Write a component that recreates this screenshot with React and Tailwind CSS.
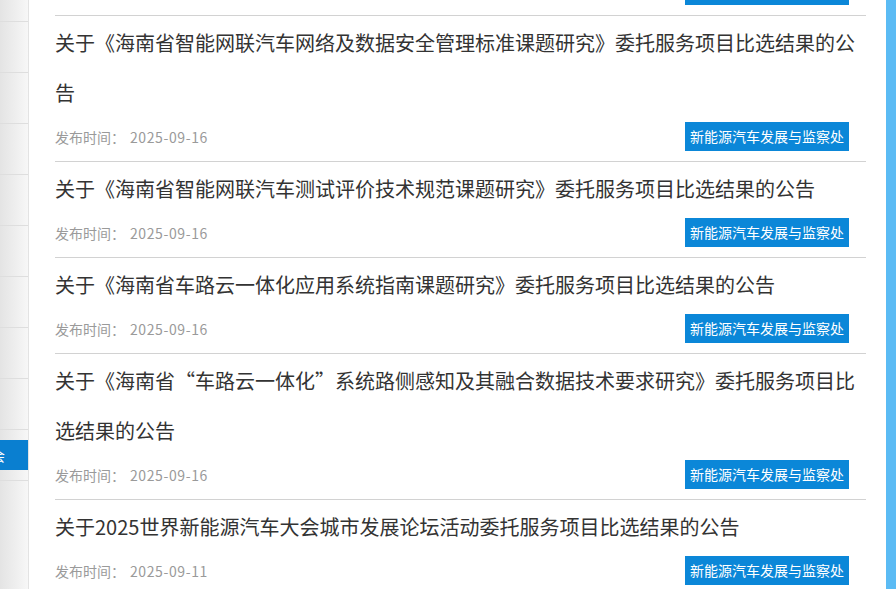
import React from 'react';

const items = [
  {
    title: '关于《海南省智能网联汽车网络及数据安全管理标准课题研究》委托服务项目比选结果的公告',
    date: '2025-09-16',
  },
  {
    title: '关于《海南省智能网联汽车测试评价技术规范课题研究》委托服务项目比选结果的公告',
    date: '2025-09-16',
  },
  {
    title: '关于《海南省车路云一体化应用系统指南课题研究》委托服务项目比选结果的公告',
    date: '2025-09-16',
  },
  {
    title: '关于《海南省“车路云一体化”系统路侧感知及其融合数据技术要求研究》委托服务项目比选结果的公告',
    date: '2025-09-16',
  },
  {
    title: '关于2025世界新能源汽车大会城市发展论坛活动委托服务项目比选结果的公告',
    date: '2025-09-11',
  },
];

const font = { fontFamily: '"Microsoft YaHei", "Noto Sans CJK SC", "Noto Sans", sans-serif' };

function Badge() {
  return (
    <span className="inline-flex items-center justify-center w-[164px] h-[29px] bg-[#0b87d8] text-white text-[14px]">
      新能源汽车发展与监察处
    </span>
  );
}

function Sidebar() {
  const rows = Array.from({ length: 8 });
  return (
    <div className="w-[29px] shrink-0 bg-gradient-to-r from-[#e4e4e4] to-[#f7f7f7] border-r border-[#e3e3e3]">
      <div className="h-[22px] border-b border-[#dedede]" />
      {rows.map((_, i) => (
        <div key={i} className="h-[51px] border-b border-[#dedede]" />
      ))}
      <div className="h-[51px] border-b border-[#dedede] pt-[10px] overflow-hidden">
        <div className="h-[30px] bg-[#0a7fd0] text-white text-[14px] leading-[30px] whitespace-nowrap overflow-hidden">
          <span className="inline-block -ml-[9px]">会</span>
        </div>
      </div>
    </div>
  );
}

export default function App() {
  return (
    <div className="flex w-[896px] h-[589px] overflow-hidden bg-white" style={font}>
      <Sidebar />
      <main className="flex-1 pl-[26px] pr-[20px] bg-white">
        <div className="h-[15px] flex justify-end pr-[17px]">
          <div className="h-[5px] w-[164px] bg-[#0b87d8]" />
        </div>
        {items.map((item, i) => (
          <div key={i} className="border-t border-[#d2d2d2] pt-[2px] pb-[10px]">
            <h3 className="text-[20px] leading-[50px] text-[#333333] font-normal">{item.title}</h3>
            <div className="mt-[4px] flex items-center justify-between pr-[17px] h-[29px]">
              <p className="text-[14px] text-[#9a9a9a] pt-[1px]">
                发布时间：<span className="ml-[5px] tracking-[0.6px]">{item.date}</span>
              </p>
              <Badge />
            </div>
          </div>
        ))}
      </main>
      <div className="w-[10px] shrink-0 bg-[#5bbbf4]" />
    </div>
  );
}
